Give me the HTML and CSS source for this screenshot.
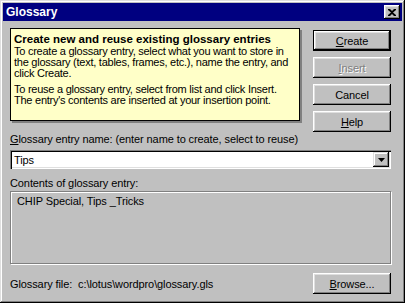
FILE: index.html
```html
<!doctype html>
<html>
  <head>
    <meta charset="utf-8">
    <link rel="stylesheet" href="styles.css">
  </head>
  <body>
    <div class="window">
      <div class="titlebar">
        <span class="title">Glossary</span>
        <span class="close">
          <svg width="8" height="7" viewBox="0 0 8 7"><path d="M0 0h2l2 2 2-2h2v1L5 3.5 8 6v1H6L4 5 2 7H0V6l3-2.5L0 1z" fill="#000"/></svg>
        </span>
      </div>
      <div class="content">
        <div class="top">
          <div class="info">
            <div class="info-head">Create new and reuse existing glossary entries</div>
            <p>To create a glossary entry, select what you want to store in the glossary (text, tables, frames, etc.), name the entry, and click Create.</p>
            <p>To reuse a glossary entry, select from list and click Insert. The entry's contents are inserted at your insertion point.</p>
          </div>
          <div class="buttons">
            <div class="btn default"><u>C</u>reate</div>
            <div class="btn disabled"><u>I</u>nsert</div>
            <div class="btn">Cancel</div>
            <div class="btn"><u>H</u>elp</div>
          </div>
        </div>
        <div class="label"><u>G</u>lossary entry name: (enter name to create, select to reuse)</div>
        <div class="combo">
          <span class="combo-text">Tips</span>
          <span class="drop">
            <svg width="7" height="4" viewBox="0 0 7 4"><path d="M0 0h7L3.5 4z" fill="#000"/></svg>
          </span>
        </div>
        <div class="label second">Contents of glossary entry:</div>
        <div class="contents">CHIP Special, Tips _Tricks</div>
        <div class="footer">
          <span>Glossary file:&nbsp; c:\lotus\wordpro\glossary.gls</span>
          <div class="btn"><u>B</u>rowse...</div>
        </div>
      </div>
    </div>
  </body>
</html>
```

FILE: styles.css
```css
* {
  box-sizing: border-box;
}
html, body {
  margin: 0;
  width: 405px;
  height: 303px;
  font-family: "Liberation Sans", Arial, sans-serif;
  font-size: 11px;
  letter-spacing: -0.1px;
  color: #000;
}
.window {
  height: 303px;
  padding: 3px;
  background: #c0c0c0;
  box-shadow: inset -1px -1px #000, inset 1px 1px #dfdfdf, inset -2px -2px #808080, inset 2px 2px #fff;
}
.titlebar {
  height: 18px;
  display: flex;
  align-items: center;
  justify-content: space-between;
  padding: 0 2px 0 3px;
  background: #000080;
  color: #fff;
  font-weight: bold;
  font-size: 12px;
  letter-spacing: 0;
}
.close {
  width: 16px;
  height: 14px;
  display: flex;
  align-items: center;
  justify-content: center;
  background: #c0c0c0;
  box-shadow: inset -1px -1px #000, inset 1px 1px #fff, inset -2px -2px #808080, inset 2px 2px #dfdfdf;
}
.content {
  padding: 7px 11px 0 7px;
}
.top {
  display: flex;
  justify-content: space-between;
}
.info {
  width: 290px;
  height: 93px;
  padding: 4px 3px 0 3px;
  background: #ffffc8;
  border: 1px solid #000;
  box-shadow: 2px 2px 0 #808080;
  line-height: 11px;
  letter-spacing: -0.25px;
}
.info-head {
  font-weight: bold;
  font-size: 11.5px;
  line-height: 13px;
  letter-spacing: 0;
}
.info p {
  margin: 0 0 5px;
}
.buttons {
  display: flex;
  flex-direction: column;
  gap: 6px;
  margin-top: 2px;
}
.btn {
  width: 78px;
  height: 21px;
  display: flex;
  align-items: center;
  justify-content: center;
  background: #c0c0c0;
  box-shadow: inset -1px -1px #000, inset 1px 1px #fff, inset -2px -2px #808080, inset 2px 2px #dfdfdf;
}
.btn.default {
  border: 1px solid #000;
}
.btn.disabled {
  color: #808080;
  text-shadow: 1px 1px #fff;
}
.label {
  height: 14px;
  line-height: 14px;
}
.label.second {
  margin-top: 7px;
}
.combo {
  margin-top: 4px;
  height: 19px;
  display: flex;
  align-items: center;
  justify-content: space-between;
  padding: 2px;
  background: #fff;
  box-shadow: inset 1px 1px #808080, inset 2px 2px #000, inset -1px -1px #fff, inset -2px -2px #dfdfdf;
}
.combo-text {
  padding-left: 2px;
}
.drop {
  width: 16px;
  height: 15px;
  display: flex;
  align-items: center;
  justify-content: center;
  background: #c0c0c0;
  box-shadow: inset -1px -1px #000, inset 1px 1px #dfdfdf, inset -2px -2px #808080, inset 2px 2px #fff;
}
.contents {
  margin-top: 1px;
  height: 73px;
  padding: 3px 6px;
  border: 1px solid #808080;
  box-shadow: inset 1px 1px #fff, 1px 1px #fff;
}
.footer {
  margin-top: 9px;
  display: flex;
  align-items: center;
  justify-content: space-between;
}
```
